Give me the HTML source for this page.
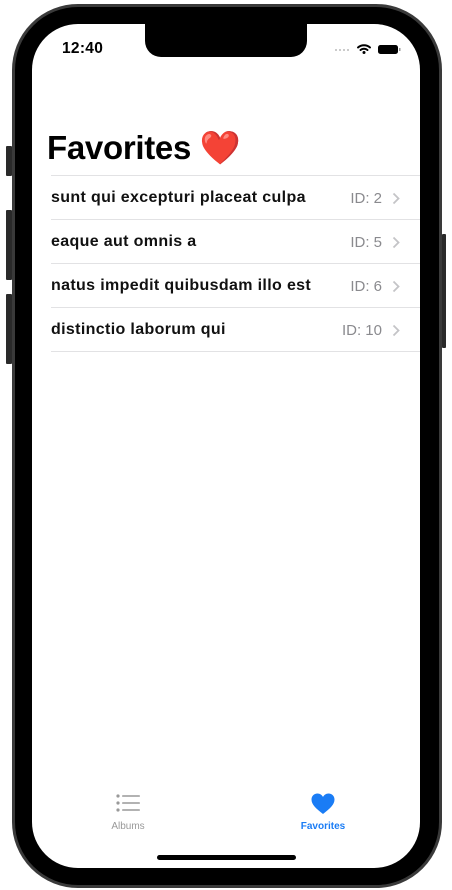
<!DOCTYPE html>
<html><head><meta charset="utf-8"><style>
*{margin:0;padding:0;box-sizing:border-box}
body{width:452px;height:890px;background:#fff;position:relative;overflow:hidden;font-family:"Liberation Sans",sans-serif}
.phone{position:absolute;left:12px;top:4px;width:430px;height:884px;border-radius:66px;background:#000;border:3px solid #3a3a3a}
.btn{position:absolute;background:#2a2a2a;border-radius:1px}
.screen{position:absolute;left:32px;top:24px;width:388px;height:844px;border-radius:46px;background:#fff;overflow:hidden}
.notch{position:absolute;left:113px;top:0;width:162px;height:33px;background:#000;border-radius:0 0 16px 16px}
.time{position:absolute;left:30px;top:16px;font-size:15.5px;font-weight:bold;color:#000;letter-spacing:0.3px}
h1{position:absolute;left:15px;top:105px;font-size:33px;font-weight:bold;color:#000;letter-spacing:-0.3px}
.sep{position:absolute;left:19px;right:0;height:1px;background:#e2e2e4}
.row{position:absolute;left:19px;right:0;height:44px}
.t{position:absolute;left:0;top:13px;font-size:16px;color:#111;font-weight:bold;letter-spacing:0.35px}
.id{position:absolute;right:38px;top:14px;font-size:15px;color:#8a8a8e}
.chev{position:absolute;right:20px;top:16px}
.tab{position:absolute;font-size:10px;text-align:center;width:80px}
</style></head><body>
<div class="btn" style="left:6px;top:146px;width:6px;height:30px"></div>
<div class="btn" style="left:6px;top:210px;width:6px;height:70px"></div>
<div class="btn" style="left:6px;top:294px;width:6px;height:70px"></div>
<div class="btn" style="left:442px;top:234px;width:4px;height:114px"></div>
<div class="phone"></div>
<div class="screen">
<div class="notch"></div>
<div class="time">12:40</div>
<svg style="position:absolute;left:302px;top:19px" width="70" height="12">
<g fill="#bbb"><circle cx="2" cy="7" r="1"/><circle cx="6" cy="7" r="1"/><circle cx="10" cy="7" r="1"/><circle cx="14" cy="7" r="1"/></g>
<path d="M24 4.5a9 9 0 0 1 12 0M26.5 7a5.5 5.5 0 0 1 7 0" stroke="#000" stroke-width="2" fill="none" stroke-linecap="round"/><circle cx="30" cy="9.5" r="1.5"/>
<rect x="44" y="2" width="20" height="9" rx="2.5" fill="#000"/><rect x="65" y="5" width="1.5" height="3" fill="#999"/>
</svg>
<h1>Favorites <span style="color:#e0101c">❤️</span></h1>
<div class="sep" style="top:151px"></div>
<div class="row" style="top:152px"><span class="t">sunt qui excepturi placeat culpa</span><span class="id">ID: 2</span><svg class="chev" width="8" height="13"><path d="M1.5 1.5l5 5-5 5" stroke="#c4c4c7" stroke-width="1.8" fill="none"/></svg></div>
<div class="sep" style="top:195px"></div>
<div class="row" style="top:196px"><span class="t">eaque aut omnis a</span><span class="id">ID: 5</span><svg class="chev" width="8" height="13"><path d="M1.5 1.5l5 5-5 5" stroke="#c4c4c7" stroke-width="1.8" fill="none"/></svg></div>
<div class="sep" style="top:239px"></div>
<div class="row" style="top:240px"><span class="t">natus impedit quibusdam illo est</span><span class="id">ID: 6</span><svg class="chev" width="8" height="13"><path d="M1.5 1.5l5 5-5 5" stroke="#c4c4c7" stroke-width="1.8" fill="none"/></svg></div>
<div class="sep" style="top:283px"></div>
<div class="row" style="top:284px"><span class="t">distinctio laborum qui</span><span class="id">ID: 10</span><svg class="chev" width="8" height="13"><path d="M1.5 1.5l5 5-5 5" stroke="#c4c4c7" stroke-width="1.8" fill="none"/></svg></div>
<div class="sep" style="top:327px"></div>
<svg style="position:absolute;left:84px;top:770px" width="25" height="18"><g fill="#999"><circle cx="2" cy="2" r="1.6"/><circle cx="2" cy="9" r="1.6"/><circle cx="2" cy="16" r="1.6"/><rect x="6" y="1.2" width="18" height="1.6" rx=".8"/><rect x="6" y="8.2" width="18" height="1.6" rx=".8"/><rect x="6" y="15.2" width="18" height="1.6" rx=".8"/></g></svg>
<div class="tab" style="left:56px;top:797px;color:#999">Albums</div>
<svg style="position:absolute;left:279px;top:769px" width="24" height="22"><path d="M12 21C5 15.5 0.5 11.5 0.5 6.5 0.5 3 3 0.5 6.5 0.5 9 0.5 11 2 12 4 13 2 15 0.5 17.5 0.5 21 0.5 23.5 3 23.5 6.5 23.5 11.5 19 15.5 12 21Z" fill="#1a7cf5"/></svg>
<div class="tab" style="left:251px;top:797px;color:#1a7cf5;font-weight:bold">Favorites</div>
<div style="position:absolute;left:125px;top:831px;width:139px;height:5px;border-radius:3px;background:#000"></div>
</div>
</body></html>
